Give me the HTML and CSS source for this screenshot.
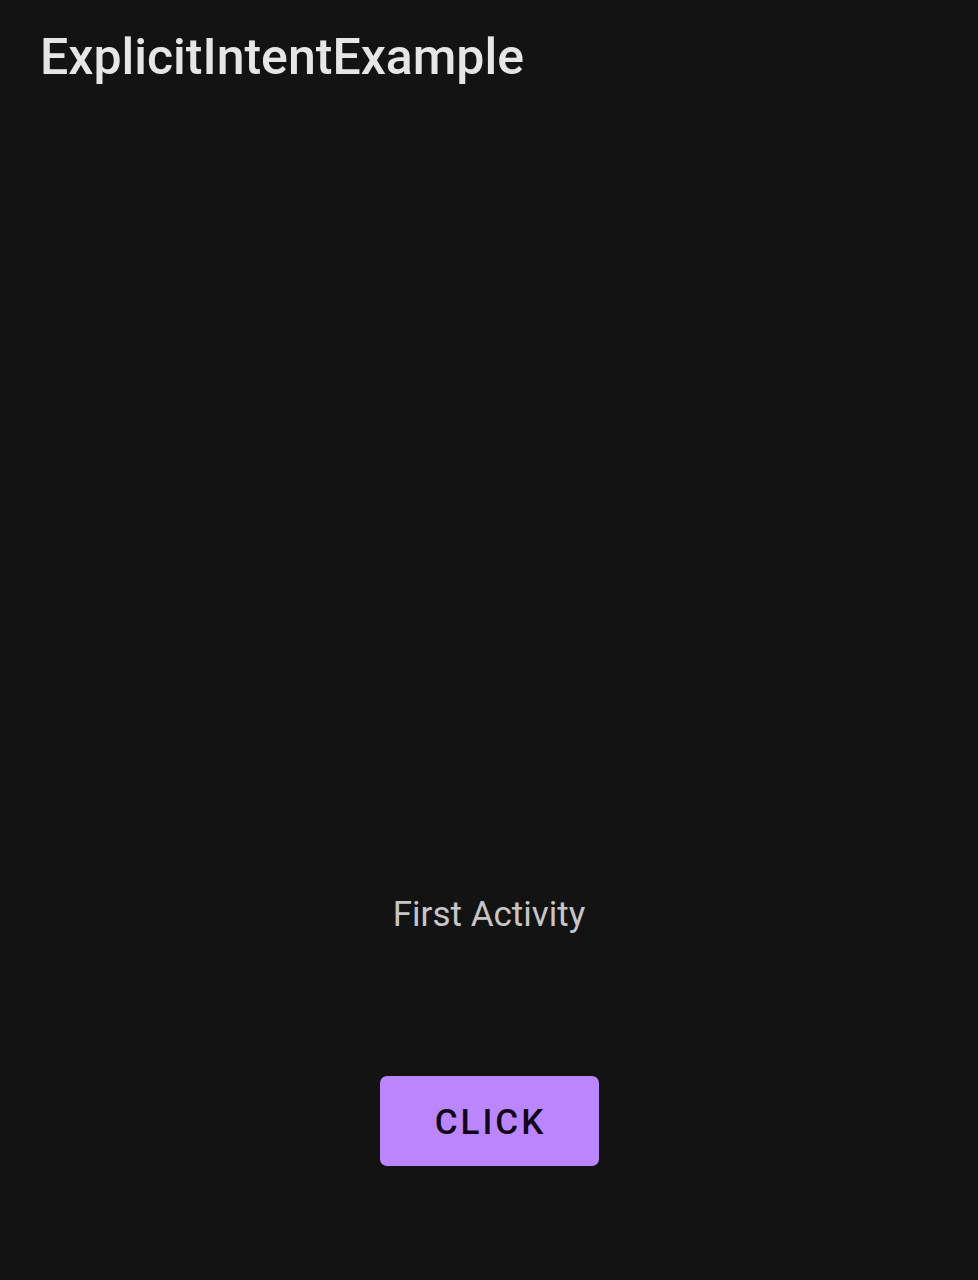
FILE: index.html
```html
<!DOCTYPE html>
<html>
<head>
<meta charset="utf-8">
<link rel="stylesheet" href="styles.css">
</head>
<body>
<div class="app">
  <header class="appbar">ExplicitIntentExample</header>
  <main class="content">
    <p class="label">First Activity</p>
    <button class="btn">CLICK</button>
  </main>
</div>
</body>
</html>
```
FILE: styles.css
```css
html, body {
  margin: 0;
  padding: 0;
  background: #131313;
}
.app {
  width: 978px;
  height: 1280px;
  display: flex;
  flex-direction: column;
  font-family: Roboto, "Noto Sans", sans-serif;
}
.appbar {
  padding: 26px 0 0 40px;
  height: 88px;
  box-sizing: border-box;
  font-size: 50px;
  font-weight: 500;
  color: #e6e6e6;
  line-height: 62px;
}
.content {
  display: flex;
  flex-direction: column;
  align-items: center;
  padding-top: 807px;
}
.label {
  margin: 0;
  font-size: 35px;
  line-height: 40px;
  color: #c6c6c6;
}
.btn {
  margin-top: 141px;
  width: 219px;
  height: 90px;
  border: none;
  border-radius: 7px;
  background: #bb86fc;
  color: #12061c;
  font-family: Roboto, "Noto Sans", sans-serif;
  font-weight: 500;
  font-size: 35px;
  letter-spacing: 3px;
  padding: 2px 0 0 3px;
}
```
